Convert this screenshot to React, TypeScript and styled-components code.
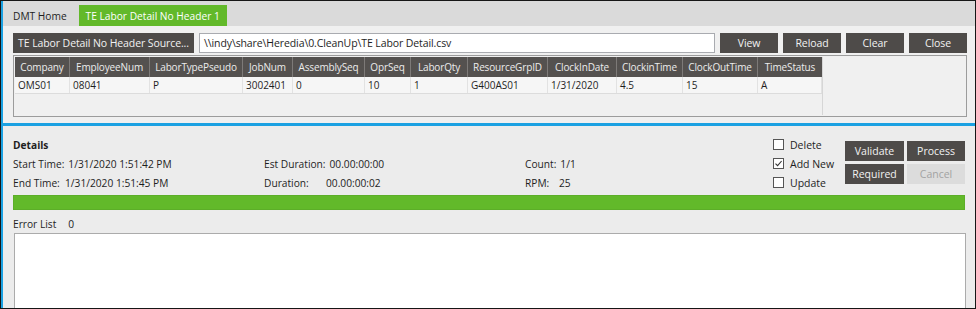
import styled, { createGlobalStyle } from 'styled-components';

const GlobalStyle = createGlobalStyle`
  html, body {
    margin: 0;
    padding: 0;
    background: #ffffff;
  }
  body {
    font-family: 'Open Sans', 'Noto Sans', sans-serif;
    font-size: 10px;
    color: #1e1e1e;
  }
  * {
    box-sizing: border-box;
  }
`;

const columns = [
  { name: 'Company', width: 55, value: 'OMS01' },
  { name: 'EmployeeNum', width: 80, value: '08041' },
  { name: 'LaborTypePseudo', width: 93, value: 'P' },
  { name: 'JobNum', width: 50, value: '3002401' },
  { name: 'AssemblySeq', width: 72, value: '0' },
  { name: 'OprSeq', width: 46, value: '10' },
  { name: 'LaborQty', width: 57, value: '1' },
  { name: 'ResourceGrpID', width: 80, value: 'G400AS01' },
  { name: 'ClockInDate', width: 69, value: '1/31/2020' },
  { name: 'ClockinTime', width: 66, value: '4.5' },
  { name: 'ClockOutTime', width: 75, value: '15' },
  { name: 'TimeStatus', width: 64, value: 'A' },
];

const Frame = styled.div`
  width: 976px;
  height: 309px;
  border: 1px solid #161616;
  overflow: hidden;
  background: #ececec;
`;

const Shell = styled.div`
  height: 100%;
  border-left: 2px solid #1ba1e2;
  display: flex;
  flex-direction: column;
`;

const TabBar = styled.div`
  height: 25px;
  flex-shrink: 0;
  background: #dadada;
  display: flex;
  align-items: flex-end;
  gap: 7px;
  padding: 3px 0 0 5px;
`;

const Tab = styled.div<{ $active?: boolean }>`
  height: 21px;
  display: flex;
  align-items: center;
  padding: 0 ${(p) => (p.$active ? '7px' : '5px')};
  background: ${(p) => (p.$active ? '#62b92a' : 'transparent')};
  color: ${(p) => (p.$active ? '#ffffff' : '#1e1e1e')};
  font-size: 10.2px;
  white-space: nowrap;
`;

const TopPanel = styled.div`
  height: 97px;
  flex-shrink: 0;
  background: #f0f0f0;
  padding: 7px 8px 0 10px;
  display: flex;
  flex-direction: column;
  gap: 2px;
`;

const Toolbar = styled.div`
  height: 20px;
  flex-shrink: 0;
  display: flex;
  gap: 5px;
`;

const DarkButton = styled.button<{ $w: number }>`
  width: ${(p) => p.$w}px;
  height: 20px;
  flex-shrink: 0;
  border: none;
  padding: 0;
  background: #4e4b49;
  color: #f2f2f2;
  font: inherit;
  font-size: 10.5px;
  letter-spacing: -0.1px;
  white-space: nowrap;
`;

const PathInput = styled.div`
  flex: 1;
  height: 20px;
  border: 1px solid #a9abb0;
  background: #ffffff;
  padding: 0 4px;
  line-height: 18px;
  font-size: 10.5px;
  letter-spacing: -0.1px;
  white-space: nowrap;
  overflow: hidden;
`;

const GridBox = styled.div`
  height: 62px;
  flex-shrink: 0;
  border: 1px solid #9c9c9c;
  padding: 1px;
  background: #f0f0f0;
  display: flex;
`;

const GridColumns = styled.div`
  border-right: 1px solid #d6d6d6;
  display: flex;
  flex-direction: column;
`;

const HeaderRow = styled.div`
  display: flex;
  height: 20px;
  background: #54514f;
`;

const HeadCell = styled.div<{ $w: number }>`
  width: ${(p) => p.$w}px;
  padding: 0 4px;
  line-height: 20px;
  text-align: center;
  color: #ececec;
  letter-spacing: -0.15px;
  border-right: 1px solid #7d7a78;
  white-space: nowrap;
  overflow: hidden;
  &:last-child {
    border-right: none;
  }
`;

const DataRow = styled.div`
  display: flex;
  height: 17px;
  background: #f6f6f6;
  border-bottom: 1px solid #dcdcdc;
`;

const DataCell = styled.div<{ $w: number }>`
  width: ${(p) => p.$w}px;
  padding: 0 3px;
  line-height: 16px;
  border-right: 1px solid #e2e2e2;
  white-space: nowrap;
  overflow: hidden;
`;

const BlueRule = styled.div`
  height: 3px;
  flex-shrink: 0;
  background: #1ba1e2;
`;

const Details = styled.div`
  flex: 1;
  min-height: 0;
  padding: 9px 10px 0 10px;
  display: flex;
  flex-direction: column;
  background: #ececec;
`;

const DetailsTop = styled.div`
  height: 57px;
  flex-shrink: 0;
  display: flex;
`;

const InfoGrid = styled.div`
  flex: 1;
  display: grid;
  grid-template-columns: 251px 261px 1fr;
  grid-auto-rows: 19px;
  align-items: center;
  font-size: 10.2px;
`;

const Title = styled.div`
  font-weight: 700;
  grid-column: 1 / -1;
`;

const Field = styled.div`
  display: flex;
  white-space: nowrap;
`;

const FieldLabel = styled.span<{ $w?: number }>`
  width: ${(p) => (p.$w ? `${p.$w}px` : 'auto')};
  margin-right: ${(p) => (p.$w ? '0' : '4px')};
`;

const CheckList = styled.div`
  width: 73px;
  display: grid;
  grid-auto-rows: 19px;
  align-items: center;
`;

const CheckRow = styled.label`
  display: flex;
  align-items: center;
  gap: 6px;
  padding-left: 1px;
  font-size: 10.5px;
`;

const Box = styled.span`
  width: 11px;
  height: 11px;
  border: 1px solid #555555;
  background: #ffffff;
  display: flex;
  align-items: center;
  justify-content: center;
`;

const Actions = styled.div`
  width: 120px;
  display: grid;
  grid-template-columns: 59px 58px;
  grid-template-rows: 20px 20px;
  gap: 3px;
  padding-top: 6px;
  align-content: start;
`;

const ActionButton = styled.button<{ $disabled?: boolean }>`
  border: none;
  padding: 0;
  font: inherit;
  font-size: 10.5px;
  background: ${(p) => (p.$disabled ? '#dcdcdc' : '#4e4b49')};
  color: ${(p) => (p.$disabled ? '#a3a3a3' : '#f2f2f2')};
`;

const ProgressBar = styled.div`
  height: 15px;
  margin-top: 3px;
  flex-shrink: 0;
  background: #62b92a;
  border: 1px solid #5cae28;
`;

const ErrorRow = styled.div`
  height: 23px;
  flex-shrink: 0;
  padding-top: 5px;
  display: flex;
  align-items: center;
  gap: 12px;
  line-height: 18px;
  font-size: 10.2px;
`;

const ErrorBox = styled.div`
  flex: 1;
  margin: 0 -1px 0 1px;
  background: #ffffff;
  border: 1px solid #ababab;
  border-bottom: none;
`;

const Check = ({ label, checked }: { label: string; checked?: boolean }) => (
  <CheckRow>
    <Box>
      {checked && (
        <svg width="9" height="9" viewBox="0 0 9 9">
          <path d="M1.5 4.6 L3.6 6.7 L7.6 2" fill="none" stroke="#333" strokeWidth="1.1" />
        </svg>
      )}
    </Box>
    {label}
  </CheckRow>
);

export default function App() {
  return (
    <>
      <GlobalStyle />
      <Frame>
        <Shell>
          <TabBar>
            <Tab>DMT Home</Tab>
            <Tab $active>TE Labor Detail No Header 1</Tab>
          </TabBar>

          <TopPanel>
            <Toolbar>
              <DarkButton $w={181}>TE Labor Detail No Header Source...</DarkButton>
              <PathInput>\\indy\share\Heredia\0.CleanUp\TE Labor Detail.csv</PathInput>
              <DarkButton $w={58}>View</DarkButton>
              <DarkButton $w={58}>Reload</DarkButton>
              <DarkButton $w={58}>Clear</DarkButton>
              <DarkButton $w={58}>Close</DarkButton>
            </Toolbar>
            <GridBox>
              <GridColumns>
                <HeaderRow>
                  {columns.map((c) => (
                    <HeadCell key={c.name} $w={c.width}>
                      {c.name}
                    </HeadCell>
                  ))}
                </HeaderRow>
                <DataRow>
                  {columns.map((c) => (
                    <DataCell key={c.name} $w={c.width}>
                      {c.value}
                    </DataCell>
                  ))}
                </DataRow>
              </GridColumns>
            </GridBox>
          </TopPanel>

          <BlueRule />

          <Details>
            <DetailsTop>
              <InfoGrid>
                <Title>Details</Title>
                <Field>
                  <FieldLabel>Start Time:</FieldLabel>1/31/2020 1:51:42 PM
                </Field>
                <Field>
                  <FieldLabel>Est Duration:</FieldLabel>00.00:00:00
                </Field>
                <Field>
                  <FieldLabel>Count:</FieldLabel>1/1
                </Field>
                <Field>
                  <FieldLabel $w={52}>End Time:</FieldLabel>1/31/2020 1:51:45 PM
                </Field>
                <Field>
                  <FieldLabel $w={62}>Duration:</FieldLabel>00.00:00:02
                </Field>
                <Field>
                  <FieldLabel $w={34}>RPM:</FieldLabel>25
                </Field>
              </InfoGrid>
              <CheckList>
                <Check label="Delete" />
                <Check label="Add New" checked />
                <Check label="Update" />
              </CheckList>
              <Actions>
                <ActionButton>Validate</ActionButton>
                <ActionButton>Process</ActionButton>
                <ActionButton>Required</ActionButton>
                <ActionButton $disabled>Cancel</ActionButton>
              </Actions>
            </DetailsTop>
            <ProgressBar />
            <ErrorRow>
              <span>Error List</span>
              <span>0</span>
            </ErrorRow>
            <ErrorBox />
          </Details>
        </Shell>
      </Frame>
    </>
  );
}
